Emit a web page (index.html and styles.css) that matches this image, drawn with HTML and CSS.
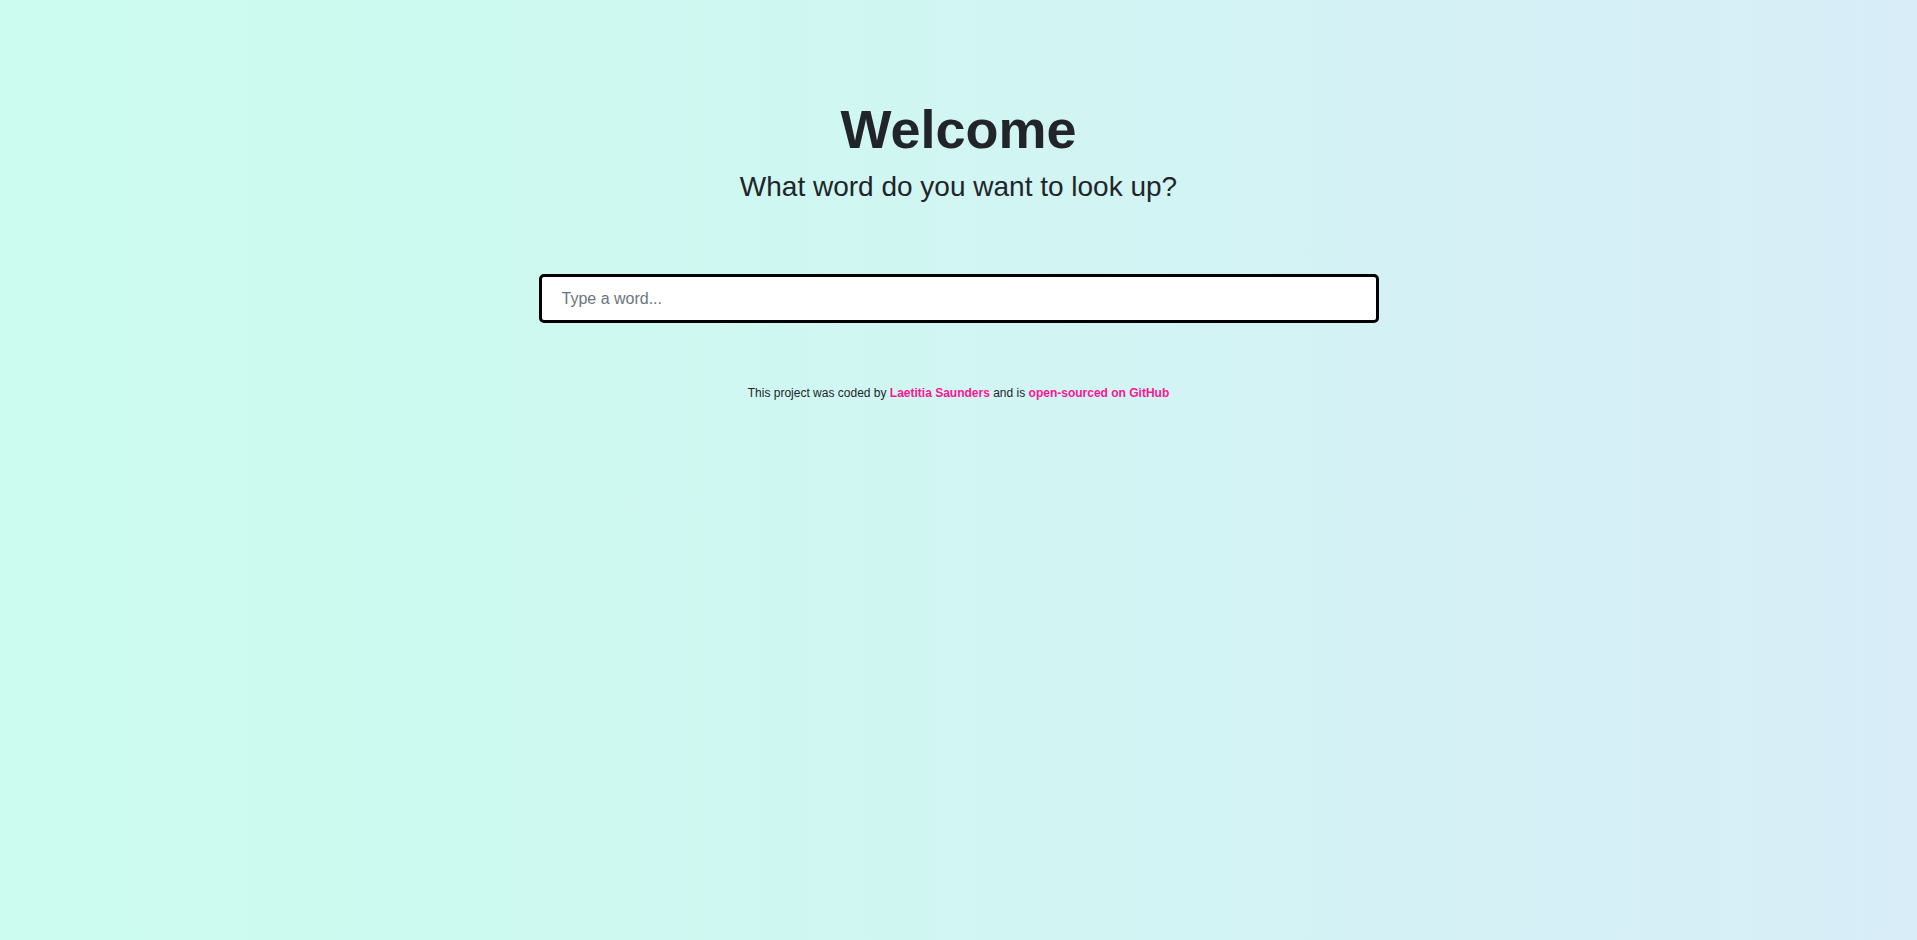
FILE: index.html
```html
<!DOCTYPE html>
<html lang="en">
<head>
<meta charset="utf-8">
<title>Dictionary</title>
<link rel="stylesheet" href="styles.css">
</head>
<body>
<div class="page">
  <header class="hero">
    <h1 class="title">Welcome</h1>
    <h2 class="subtitle">What word do you want to look up?</h2>
  </header>
  <form class="search">
    <input class="search-input" type="search" placeholder="Type a word...">
  </form>
  <footer class="credits">
    This project was coded by <a class="credit-link" href="#">Laetitia Saunders</a> and is <a class="credit-link" href="#">open-sourced on GitHub</a>
  </footer>
</div>
</body>
</html>
```

FILE: styles.css
```css
html, body {
  margin: 0;
  padding: 0;
  height: 100%;
}

body {
  font-family: "Liberation Sans", Arial, sans-serif;
  color: #212529;
  background: linear-gradient(to right, #ccfbef 0%, #cdfaf0 25%, #d8edf8 100%);
}

.page {
  width: 840px;
  margin: 0 auto;
  padding-top: 97px;
  display: flex;
  flex-direction: column;
  align-items: stretch;
}

.hero {
  text-align: center;
}

.title {
  margin: 0;
  font-size: 54px;
  font-weight: 700;
  line-height: 1.2;
  color: #212529;
}

.subtitle {
  margin: 8px 0 0;
  font-size: 28px;
  font-weight: 400;
  line-height: 1.2;
  color: #212529;
}

.search {
  margin: 71px 0 0;
}

.search-input {
  box-sizing: border-box;
  display: block;
  width: 100%;
  height: 49px;
  padding: 0 20px;
  border: 3px solid #000;
  border-radius: 5px;
  background: #fff;
  font-family: "Liberation Sans", Arial, sans-serif;
  font-size: 16px;
  color: #212529;
  outline: none;
  -webkit-appearance: none;
  appearance: none;
}

.search-input::placeholder {
  color: #6c757d;
}

.credits {
  margin-top: 61px;
  text-align: center;
  font-size: 12px;
  line-height: 18px;
  color: #212529;
}

.credit-link {
  color: #ff1493;
  font-weight: 700;
  text-decoration: none;
}
```
